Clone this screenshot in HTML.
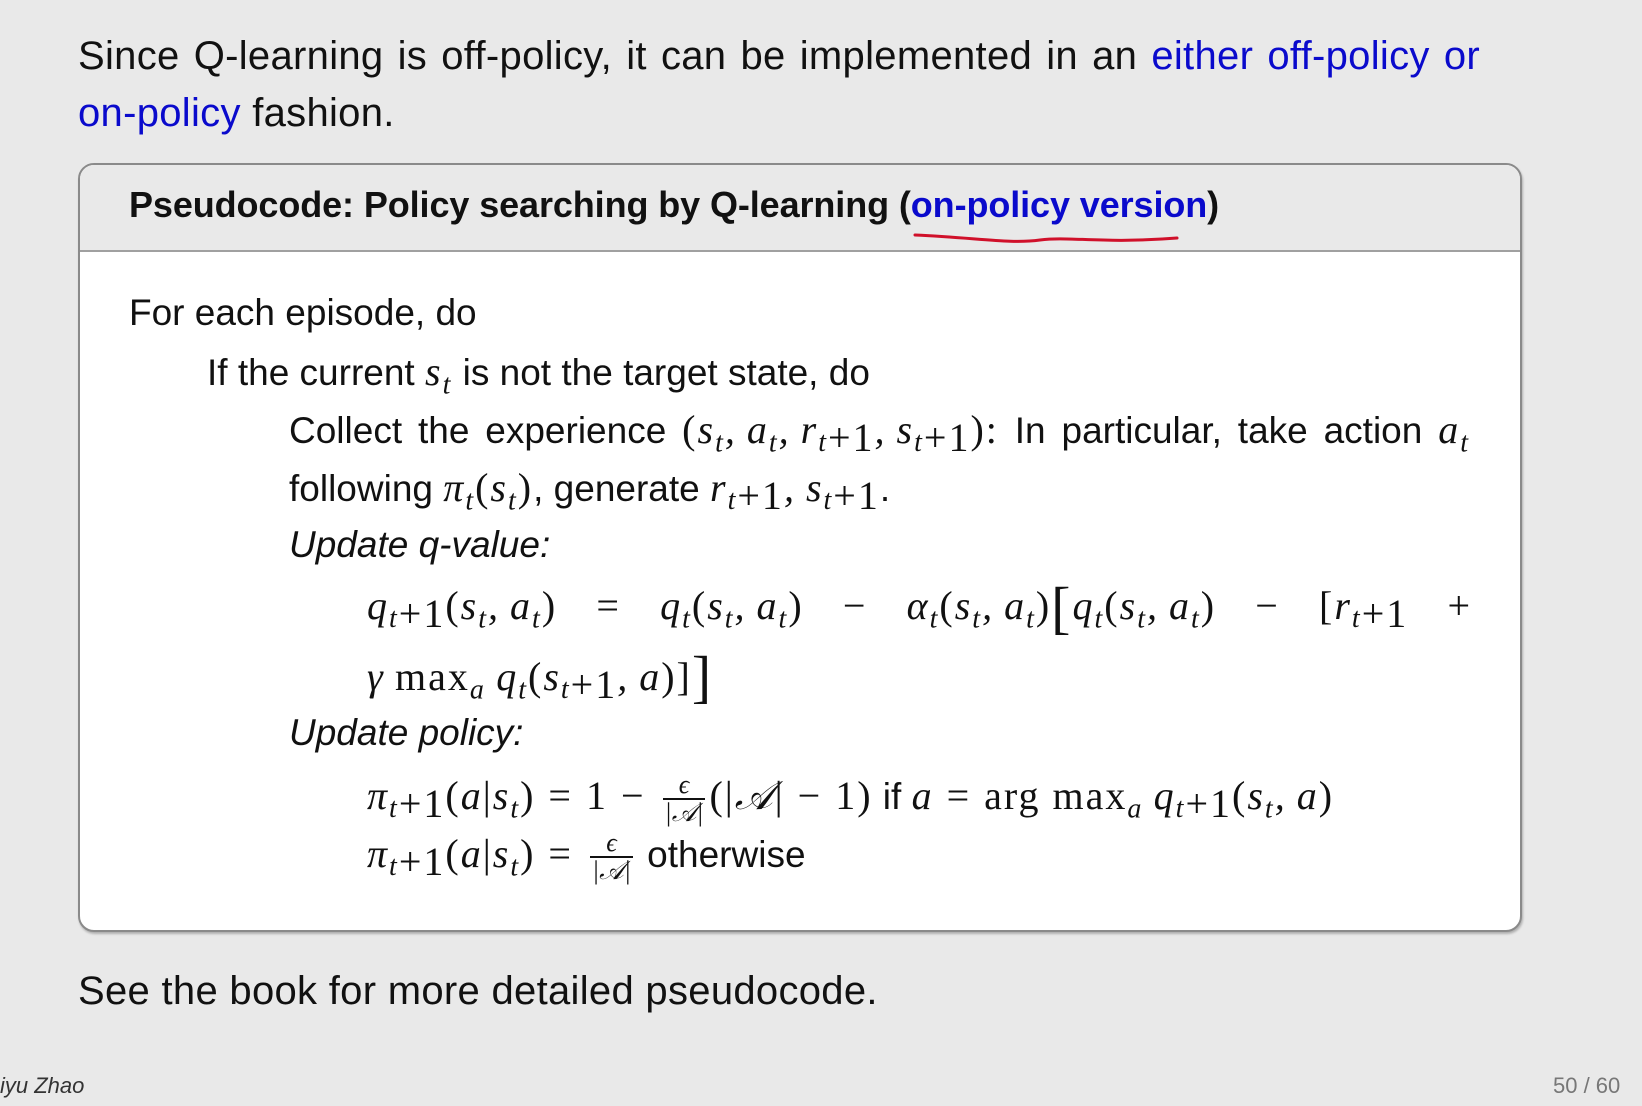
<!DOCTYPE html>
<html><head><meta charset="utf-8"><style>
body{margin:0;width:1642px;height:1100px;background:#e9e9e9;position:relative;overflow:hidden;font-family:"Liberation Sans",sans-serif;color:#111}
.l{position:absolute;white-space:nowrap;font-size:37px;line-height:40px;letter-spacing:0}
.o{font-size:40px;letter-spacing:0.3px}
.b{color:#0a0acc}
.m{font-family:"Liberation Serif",serif;font-style:italic;font-size:40px;letter-spacing:2px}
.r{font-family:"Liberation Serif",serif;font-style:normal;font-size:40px;letter-spacing:2px}
.p{margin:0 13px}
.c{display:inline-block;width:10px}
sub{font-size:0.7em;vertical-align:-0.3em;line-height:0}
.j{text-align:justify;text-align-last:justify;white-space:normal}
.box{position:absolute;left:78px;top:163px;width:1440px;height:765px;border:2px solid #8a8a8a;border-radius:16px;background:#fff;overflow:hidden;box-shadow:1px 2px 2px rgba(0,0,0,.25)}
.hd{position:absolute;left:0;top:0;right:0;height:85px;background:#e9e9e9;border-bottom:2px solid #a0a0a0}
.fr{display:inline-block;vertical-align:middle;text-align:center;font-size:26px;line-height:26px;font-family:"Liberation Serif",serif;font-style:italic;margin:0 4px}
.fr span{display:block}
.fr span+span{border-top:2px solid #111;padding:0 2px}
</style></head><body>
<div class="l o j" style="left:78px;top:36px;width:1402px">Since Q-learning is off-policy, it can be implemented in an <span class="b">either off-policy or</span></div>
<div class="l o" style="left:78px;top:93px"><span class="b">on-policy</span> fashion.</div>

<div class="box"><div class="hd"></div></div>
<div class="l" style="left:129px;top:185px;font-weight:bold;font-size:36px;letter-spacing:-0.1px">Pseudocode: Policy searching by Q-learning (<span class="b">on-policy version</span>)</div>
<svg style="position:absolute;left:0;top:0" width="1642" height="260"><path d="M915 235 C980 238 1010 244 1040 240 C1070 236 1100 244 1177 238" stroke="#d0102a" stroke-width="3" fill="none" stroke-linecap="round"/></svg>

<div class="l" style="left:129px;top:293px">For each episode, do</div>
<div class="l" style="left:207px;top:352px">If the current <span class="m">s<sub>t</sub></span> is not the target state, do</div>
<div class="l j" style="left:289px;top:410px;width:1181px">Collect the experience <span class="r">(</span><span class="m">s<sub>t</sub>,<span class="c"></span>a<sub>t</sub>,<span class="c"></span>r<sub>t<span class="r">+1</span></sub>,<span class="c"></span>s<sub>t<span class="r">+1</span></sub></span><span class="r">):</span> In particular, take action <span class="m">a<sub>t</sub></span></div>
<div class="l" style="left:289px;top:468px">following <span class="m">π<sub>t</sub></span><span class="r">(</span><span class="m">s<sub>t</sub></span><span class="r">)</span>, generate <span class="m">r<sub>t<span class="r">+1</span></sub>,<span class="c"></span>s<sub>t<span class="r">+1</span></sub></span>.</div>
<div class="l" style="left:289px;top:525px;font-style:italic">Update q-value:</div>
<div class="l j" style="left:367px;top:586px;width:1105px"><span class="m">q<sub>t<span class="r">+1</span></sub></span><span class="r">(</span><span class="m">s<sub>t</sub>,<span class="c"></span>a<sub>t</sub></span><span class="r">)</span> <span class="r">=</span> <span class="m">q<sub>t</sub></span><span class="r">(</span><span class="m">s<sub>t</sub>,<span class="c"></span>a<sub>t</sub></span><span class="r">)</span> <span class="r">−</span> <span class="m">α<sub>t</sub></span><span class="r">(</span><span class="m">s<sub>t</sub>,<span class="c"></span>a<sub>t</sub></span><span class="r">)<span style="font-size:58px;vertical-align:-8px;line-height:0">[</span></span><span class="m">q<sub>t</sub></span><span class="r">(</span><span class="m">s<sub>t</sub>,<span class="c"></span>a<sub>t</sub></span><span class="r">)</span> <span class="r">−</span> <span class="r">[</span><span class="m">r<sub>t<span class="r">+1</span></sub></span> <span class="r">+</span></div>
<div class="l" style="left:367px;top:657px"><span class="m">γ</span> <span class="r">max<sub><i>a</i></sub></span> <span class="m">q<sub>t</sub></span><span class="r">(</span><span class="m">s<sub>t<span class="r">+1</span></sub>,<span class="c"></span>a</span><span class="r">)]<span style="font-size:58px;vertical-align:-6px;line-height:0">]</span></span></div>
<div class="l" style="left:289px;top:713px;font-style:italic">Update policy:</div>
<div class="l" style="left:367px;top:772px"><span class="m">π<sub>t<span class="r">+1</span></sub></span><span class="r">(</span><span class="m">a</span><span class="r">|</span><span class="m">s<sub>t</sub></span><span class="r">)<span class="p">=</span>1<span class="p">−</span></span><span class="fr"><span>ϵ</span><span>|𝒜|</span></span><span class="r">(|</span><span class="m">𝒜</span><span class="r">|<span class="p">−</span>1)</span> if <span class="m">a</span><span class="r"><span class="p">=</span>arg max<sub><i>a</i></sub></span> <span class="m">q<sub>t<span class="r">+1</span></sub></span><span class="r">(</span><span class="m">s<sub>t</sub>,<span class="c"></span>a</span><span class="r">)</span></div>
<div class="l" style="left:367px;top:830px"><span class="m">π<sub>t<span class="r">+1</span></sub></span><span class="r">(</span><span class="m">a</span><span class="r">|</span><span class="m">s<sub>t</sub></span><span class="r">)<span class="p">=</span></span><span class="fr"><span>ϵ</span><span>|𝒜|</span></span> otherwise</div>

<div class="l o" style="left:78px;top:971px">See the book for more detailed pseudocode.</div>
<div class="l" style="left:0;top:1066px;font-size:22px;font-style:italic;color:#333">iyu Zhao</div>
<div class="l" style="left:1553px;top:1066px;font-size:22px;color:#777">50 / 60</div>
</body></html>
